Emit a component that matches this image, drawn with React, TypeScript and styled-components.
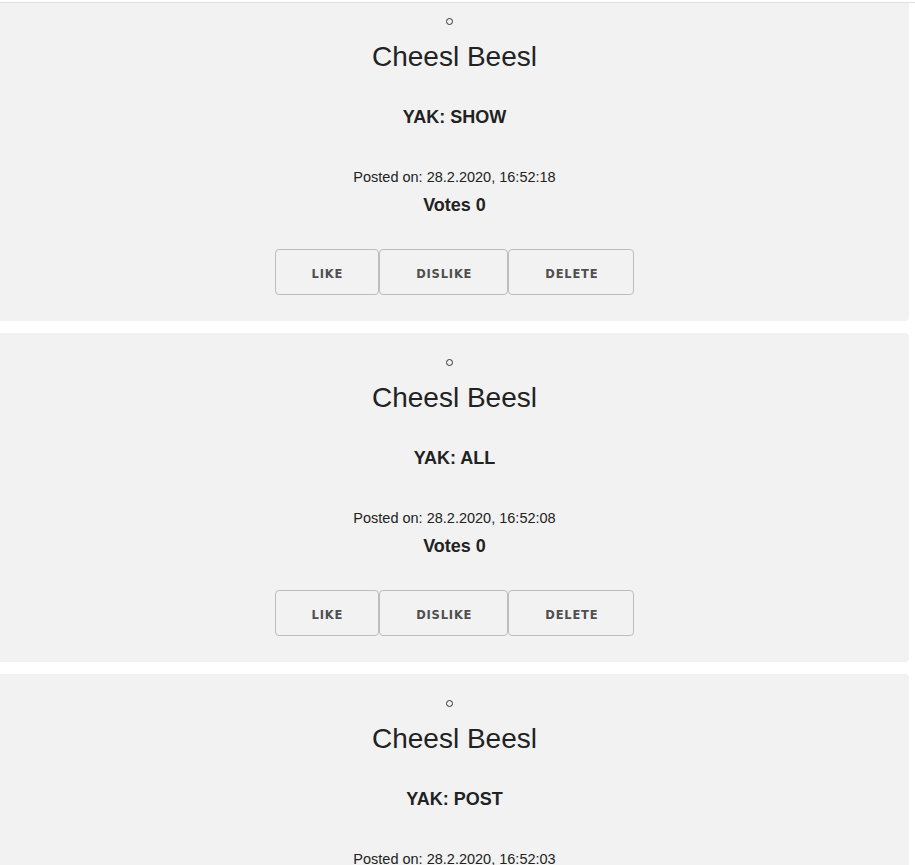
import React from "react";
import styled, { createGlobalStyle } from "styled-components";

interface Yak {
  id: number;
  author: string;
  text: string;
  postedOn: string;
  votes: number;
}

const yaks: Yak[] = [
  { id: 1, author: "Cheesl Beesl", text: "SHOW", postedOn: "28.2.2020, 16:52:18", votes: 0 },
  { id: 2, author: "Cheesl Beesl", text: "ALL", postedOn: "28.2.2020, 16:52:08", votes: 0 },
  { id: 3, author: "Cheesl Beesl", text: "POST", postedOn: "28.2.2020, 16:52:03", votes: 0 },
];

const GlobalStyle = createGlobalStyle`
  html, body {
    margin: 0;
    padding: 0;
    background: #ffffff;
    font-family: "Liberation Sans", Arial, sans-serif;
    color: #222222;
  }
`;

const App = () => {
  return (
    <>
      <GlobalStyle />
      <TopRule />
      <Feed>
        {yaks.map((yak) => (
          <YakCard key={yak.id} yak={yak} />
        ))}
      </Feed>
    </>
  );
};

const YakCard = ({ yak }: { yak: Yak }) => (
  <Card>
    <Bullet />
    <Author>{yak.author}</Author>
    <YakText>YAK: {yak.text}</YakText>
    <Posted>Posted on: {yak.postedOn}</Posted>
    <Votes>Votes {yak.votes}</Votes>
    <Actions>
      <ActionButton>LIKE</ActionButton>
      <ActionButton>DISLIKE</ActionButton>
      <ActionButton>DELETE</ActionButton>
    </Actions>
  </Card>
);

export default App;

const TopRule = styled.div`
  position: fixed;
  top: 0;
  left: 0;
  right: 0;
  height: 2px;
  background: #ffffff;
  border-bottom: 1px solid #e0e0e0;
  z-index: 10;
`;

const Feed = styled.div`
  display: flex;
  flex-direction: column;
  gap: 12px;
  margin-top: -8px;
  width: 909px;
`;

const Card = styled.div`
  display: flex;
  flex-direction: column;
  align-items: center;
  background: #f2f2f2;
  border-radius: 0 4px 4px 0;
  padding: 26px 0 26px;
`;

const Bullet = styled.span`
  display: block;
  box-sizing: border-box;
  width: 7px;
  height: 7px;
  border: 1px solid #333333;
  border-radius: 50%;
  margin-right: 10px;
`;

const Author = styled.h2`
  margin: 16px 0 0;
  font-size: 28px;
  line-height: 32px;
  font-weight: 400;
  color: #222222;
`;

const YakText = styled.h3`
  margin: 33px 0 0;
  font-size: 18px;
  line-height: 22px;
  font-weight: 700;
`;

const Posted = styled.p`
  margin: 40px 0 0;
  font-size: 14.5px;
  line-height: 18px;
`;

const Votes = styled.h3`
  margin: 8px 0 0;
  font-size: 18px;
  line-height: 22px;
  font-weight: 700;
`;

const Actions = styled.div`
  display: flex;
  margin-top: 33px;
`;

const ActionButton = styled.button`
  height: 46px;
  padding: 3px 35px 0 36px;
  background: #f2f2f2;
  border: 1px solid #bdbdbd;
  border-radius: 4px;
  font-family: "DejaVu Sans", Verdana, sans-serif;
  font-size: 11.5px;
  font-weight: 700;
  letter-spacing: 0.8px;
  color: #4f4f4f;
  cursor: pointer;
`;
